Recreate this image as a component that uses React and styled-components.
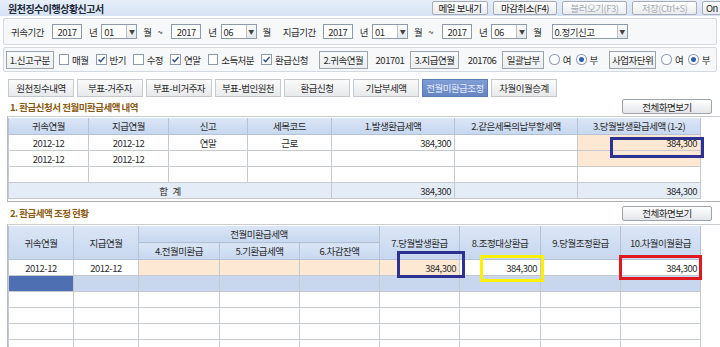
import React from 'react';
import styled, { createGlobalStyle } from 'styled-components';

const GlobalStyle = createGlobalStyle`
  html, body {
    margin: 0;
    padding: 0;
    background: #ffffff;
  }
  body {
    font-family: "Noto Sans CJK KR", "Noto Sans", sans-serif;
    font-size: 9.5px;
    letter-spacing: -0.5px;
    color: #2b2b2b;
  }
`;

const Page = styled('div')`
  width: 720px;
  height: 347px;
  overflow: hidden;
  background: #ffffff;
`;

const TitleBar = styled('div')`
  height: 16px;
  display: flex;
  align-items: center;
  justify-content: space-between;
  padding-left: 8px;
  background: linear-gradient(#e6eef9, #d6e3f4);
  overflow: hidden;
`;

const Title = styled('div')`
  font-size: 10px;
  font-weight: 700;
  color: #1f2a3a;
`;

const TopButtons = styled('div')`
  display: flex;
  gap: 5px;
  flex: none;
  margin-right: -8px;
`;

const TopButton = styled('div')`
  height: 14px;
  width: ${(p) => p.$w}px;
  display: flex;
  align-items: center;
  justify-content: ${(p) => (p.$cut ? 'flex-start' : 'center')};
  padding-left: ${(p) => (p.$cut ? 3 : 0)}px;
  border: 1px solid #a9adb3;
  border-radius: 2px;
  background: linear-gradient(#ffffff, #e9ebee);
  color: ${(p) => (p.$disabled ? '#a8adb4' : '#222')};
  box-sizing: border-box;
`;

const FilterBox = styled('div')`
  margin: ${(p) => p.$mt}px 3px 0 3px;
  height: ${(p) => p.$h}px;
  display: flex;
  align-items: center;
  padding: 0 6px 0 ${(p) => p.$pl}px;
  border: 1px solid #d3d9e2;
  border-radius: 2px;
  background: #f7f8fa;
  box-sizing: border-box;
  white-space: nowrap;
`;

const Text = styled('span')`
  margin-left: ${(p) => p.$ml || 0}px;
  color: #2b2b2b;
`;

const TextInput = styled('span')`
  margin-left: ${(p) => p.$ml || 0}px;
  width: 30px;
  height: 15px;
  display: inline-flex;
  align-items: center;
  justify-content: center;
  border: 1px solid #8c9aab;
  background: #fff;
  box-sizing: border-box;
`;

const Select = styled('span')`
  margin-left: ${(p) => p.$ml || 0}px;
  width: ${(p) => p.$w}px;
  height: 15px;
  display: inline-flex;
  align-items: center;
  border: 1px solid #8c9aab;
  background: #fff;
  box-sizing: border-box;
  padding-left: 2px;

  span {
    flex: 1;
  }

  i {
    width: 9px;
    height: 13px;
    border-left: 1px solid #b9c2cd;
    background: linear-gradient(#fbfbfb, #e5e8ec);
    display: flex;
    align-items: center;
    justify-content: center;
    font-style: normal;
    font-size: 6px;
    color: #444;
  }
`;

const LabelBox = styled('span')`
  margin-left: ${(p) => p.$ml || 0}px;
  width: ${(p) => p.$w}px;
  height: 18px;
  display: inline-flex;
  align-items: center;
  justify-content: center;
  border: 1px solid #9ba3ad;
  background: linear-gradient(#fafafa, #eceef0);
  box-sizing: border-box;
`;

const Box = styled('span')`
  margin-left: ${(p) => p.$ml || 0}px;
  width: 11px;
  height: 11px;
  display: inline-flex;
  align-items: center;
  justify-content: center;
  border: 1px solid #8d9bb0;
  border-radius: ${(p) => (p.$round ? '50%' : '0')};
  background: #fff;
  box-sizing: border-box;
  margin-right: 3px;
`;

const Dot = styled('span')`
  width: 5px;
  height: 5px;
  border-radius: 50%;
  background: #2f5fb0;
`;

function Check({ checked, ml, children }) {
  return (
    <>
      <Box $ml={ml}>
        {checked && (
          <svg width="9" height="9" viewBox="0 0 9 9">
            <path d="M1.5 4.5 L3.6 6.6 L7.6 2" fill="none" stroke="#2b4f8c" strokeWidth="1.4" />
          </svg>
        )}
      </Box>
      <Text>{children}</Text>
    </>
  );
}

function Radio({ checked, ml, children }) {
  return (
    <>
      <Box $round $ml={ml}>
        {checked && <Dot />}
      </Box>
      <Text>{children}</Text>
    </>
  );
}

const Tabs = styled('div')`
  display: flex;
  gap: 3px;
  margin: 7px 0 0 8px;
`;

const Tab = styled('div')`
  width: 66px;
  height: 18px;
  display: flex;
  align-items: center;
  justify-content: center;
  border: 1px solid ${(p) => (p.$active ? '#5c7cb8' : '#c6c9cd')};
  background: ${(p) => (p.$active ? 'linear-gradient(#7f9ed6, #6685c1)' : 'linear-gradient(#fbfbfb, #e8e9eb)')};
  color: ${(p) => (p.$active ? '#e4ecff' : '#2b2b2b')};
  box-sizing: border-box;
`;

const SectionHead = styled('div')`
  display: flex;
  align-items: center;
  justify-content: space-between;
  height: ${(p) => p.$h}px;
  padding: 0 8px 0 10px;
`;

const SectionTitle = styled('div')`
  font-weight: 700;
  color: #8a5a10;
`;

const ViewButton = styled('div')`
  width: 90px;
  height: 15px;
  display: flex;
  align-items: center;
  justify-content: center;
  border: 1px solid #9da3aa;
  border-radius: 2px;
  background: linear-gradient(#ffffff, #e3e5e8);
  box-sizing: border-box;
`;

const Frame = styled('div')`
  position: relative;
  margin-left: 7px;
  border-top: 1px solid #c9cdd2;
  border-left: 1px solid #b6bcc4;
  border-bottom: ${(p) => (p.$closed ? '1px solid #a9adb3' : 'none')};
  padding: 1px 0 2px;
`;

const Grid = styled('table')`
  width: 692px;
  border-collapse: collapse;
  table-layout: fixed;
`;

const Th = styled('th')`
  height: ${(p) => p.$h || 16}px;
  padding: 0;
  font-weight: 400;
  color: #2b2b2b;
  background: linear-gradient(#dbe6f6, #c7d7ef);
  border: 1px solid #b3c2d6;
  border-top: none;
  text-align: center;
`;

const Td = styled('td')`
  height: 15px;
  padding: 0 3px;
  border: 1px solid #c6c9cd;
  background: ${(p) => p.$bg || '#ffffff'};
  text-align: ${(p) => p.$align || 'center'};
  white-space: nowrap;
  overflow: hidden;
`;

const Mark = styled('div')`
  position: absolute;
  left: ${(p) => p.$x}px;
  top: ${(p) => p.$y}px;
  width: ${(p) => p.$w}px;
  height: ${(p) => p.$h}px;
  border: 3px solid ${(p) => p.$color};
  box-sizing: border-box;
  pointer-events: none;
`;

const PEACH = '#fde9d3';
const SUM = '#e4ecf8';
const SEL = '#c9d7ee';
const SEL_DARK = '#4e70b2';

const tabs = ['원천징수내역', '부표-거주자', '부표-비거주자', '부표-법인원천', '환급신청', '기납부세액', '전월미환급조정', '차월이월승계'];

export default function App() {
  return (
    <Page>
      <GlobalStyle />
      <TitleBar>
        <Title>원천징수이행상황신고서</Title>
        <TopButtons>
          <TopButton $w={56}>메일 보내기</TopButton>
          <TopButton $w={64}>마감취소(F4)</TopButton>
          <TopButton $w={65} $disabled>불러오기(F3)</TopButton>
          <TopButton $w={65} $disabled>저장(Ctrl+S)</TopButton>
          <TopButton $w={26} $cut>On</TopButton>
        </TopButtons>
      </TitleBar>

      <FilterBox $mt={2} $h={27} $pl={7}>
        <Text>귀속기간</Text>
        <TextInput $ml={8}>2017</TextInput>
        <Text $ml={7}>년</Text>
        <Select $ml={4} $w={36}><span>01</span><i>▼</i></Select>
        <Text $ml={6}>월</Text>
        <Text $ml={6}>~</Text>
        <TextInput $ml={9}>2017</TextInput>
        <Text $ml={7}>년</Text>
        <Select $ml={4} $w={36}><span>06</span><i>▼</i></Select>
        <Text $ml={6}>월</Text>
        <Text $ml={12}>지급기간</Text>
        <TextInput $ml={7}>2017</TextInput>
        <Text $ml={7}>년</Text>
        <Select $ml={4} $w={36}><span>01</span><i>▼</i></Select>
        <Text $ml={6}>월</Text>
        <Text $ml={6}>~</Text>
        <TextInput $ml={9}>2017</TextInput>
        <Text $ml={7}>년</Text>
        <Select $ml={4} $w={36}><span>06</span><i>▼</i></Select>
        <Text $ml={6}>월</Text>
        <Select $ml={10} $w={76}><span>0.정기신고</span><i>▼</i></Select>
      </FilterBox>

      <FilterBox $mt={2} $h={25} $pl={2}>
        <LabelBox $w={50}>1.신고구분</LabelBox>
        <Check ml={5}>매월</Check>
        <Check ml={7} checked>반기</Check>
        <Check ml={7}>수정</Check>
        <Check ml={7} checked>연말</Check>
        <Check ml={7}>소득처분</Check>
        <Check ml={7} checked>환급신청</Check>
        <LabelBox $ml={11} $w={51}>2.귀속연월</LabelBox>
        <Text $ml={8}>201701</Text>
        <LabelBox $ml={6} $w={51}>3.지급연월</LabelBox>
        <Text $ml={9}>201706</Text>
        <LabelBox $ml={6} $w={44}>일괄납부</LabelBox>
        <Radio ml={5}>여</Radio>
        <Radio ml={5} checked>부</Radio>
        <LabelBox $ml={11} $w={50}>사업자단위</LabelBox>
        <Radio ml={5}>여</Radio>
        <Radio ml={5} checked>부</Radio>
      </FilterBox>

      <Tabs>
        {tabs.map((t) => (
          <Tab key={t} $active={t === '전월미환급조정'}>{t}</Tab>
        ))}
      </Tabs>

      <SectionHead $h={19}>
        <SectionTitle>1. 환급신청서 전월미환급세액 내역</SectionTitle>
        <ViewButton>전체화면보기</ViewButton>
      </SectionHead>

      <Frame $closed>
        <Grid>
          <colgroup>
            <col style={{ width: 80 }} />
            <col style={{ width: 80 }} />
            <col style={{ width: 79 }} />
            <col style={{ width: 84 }} />
            <col style={{ width: 123 }} />
            <col style={{ width: 123 }} />
            <col style={{ width: 123 }} />
          </colgroup>
          <thead>
            <tr>
              <Th $h={16}>귀속연월</Th>
              <Th>지급연월</Th>
              <Th>신고</Th>
              <Th>세목코드</Th>
              <Th>1.발생환급세액</Th>
              <Th>2.같은세목의납부할세액</Th>
              <Th>3.당월발생환급세액 (1-2)</Th>
            </tr>
          </thead>
          <tbody>
            <tr>
              <Td>2012-12</Td>
              <Td>2012-12</Td>
              <Td>연말</Td>
              <Td>근로</Td>
              <Td $align="right">384,300</Td>
              <Td />
              <Td $bg={PEACH} $align="right">384,300</Td>
            </tr>
            <tr>
              <Td>2012-12</Td>
              <Td>2012-12</Td>
              <Td />
              <Td />
              <Td />
              <Td />
              <Td $bg={PEACH} />
            </tr>
            <tr>
              <Td />
              <Td />
              <Td />
              <Td />
              <Td />
              <Td />
              <Td />
            </tr>
            <tr>
              <Td $bg={SUM} colSpan={4}>합&nbsp;&nbsp;&nbsp;계</Td>
              <Td $bg={SUM} $align="right">384,300</Td>
              <Td $bg={SUM} />
              <Td $bg={SUM} $align="right">384,300</Td>
            </tr>
          </tbody>
        </Grid>
        <Mark $color="#2d3192" $x={602} $y={20} $w={94} $h={21} />
      </Frame>

      <SectionHead $h={22}>
        <SectionTitle>2. 환급세액 조정 현황</SectionTitle>
        <ViewButton>전체화면보기</ViewButton>
      </SectionHead>

      <Frame>
        <Grid>
          <colgroup>
            <col style={{ width: 65 }} />
            <col style={{ width: 65 }} />
            <col style={{ width: 81 }} />
            <col style={{ width: 80 }} />
            <col style={{ width: 80 }} />
            <col style={{ width: 80 }} />
            <col style={{ width: 81 }} />
            <col style={{ width: 80 }} />
            <col style={{ width: 80 }} />
          </colgroup>
          <thead>
            <tr>
              <Th rowSpan={2}>귀속연월</Th>
              <Th rowSpan={2}>지급연월</Th>
              <Th colSpan={3}>전월미환급세액</Th>
              <Th rowSpan={2}>7.당월발생환급</Th>
              <Th rowSpan={2}>8.조정대상환급</Th>
              <Th rowSpan={2}>9.당월조정환급</Th>
              <Th rowSpan={2}>10.차월이월환급</Th>
            </tr>
            <tr>
              <Th>4.전월미환급</Th>
              <Th>5.기환급세액</Th>
              <Th>6.차감잔액</Th>
            </tr>
          </thead>
          <tbody>
            <tr>
              <Td>2012-12</Td>
              <Td>2012-12</Td>
              <Td $bg={PEACH} />
              <Td $bg={PEACH} />
              <Td $bg={PEACH} />
              <Td $bg={PEACH} $align="right">384,300</Td>
              <Td $align="right">384,300</Td>
              <Td />
              <Td $align="right">384,300</Td>
            </tr>
            <tr>
              <Td $bg={SEL_DARK} />
              {Array.from({ length: 8 }).map((_, i) => (
                <Td key={i} $bg={SEL} />
              ))}
            </tr>
            {Array.from({ length: 4 }).map((_, r) => (
              <tr key={r}>
                {Array.from({ length: 9 }).map((_, i) => (
                  <Td key={i} />
                ))}
              </tr>
            ))}
          </tbody>
        </Grid>
        <Mark $color="#2d3192" $x={389} $y={26} $w={68} $h={27} />
        <Mark $color="#fff000" $x={472} $y={30} $w={64} $h={27} />
        <Mark $color="#e01820" $x={611} $y={30} $w={83} $h={25} />
      </Frame>
    </Page>
  );
}
